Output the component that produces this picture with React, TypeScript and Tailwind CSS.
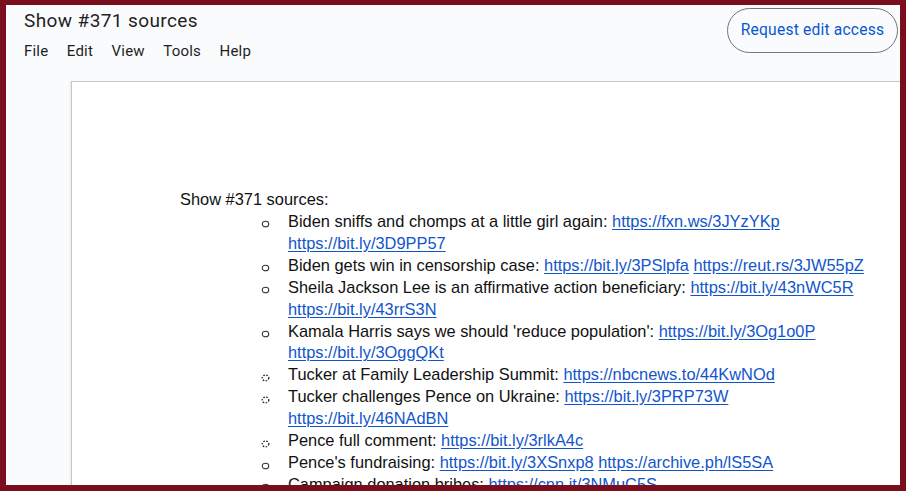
import React from "react";

type Seg = { t: string; link?: boolean };
type Item = { dotted?: boolean; lines: Seg[][] };

const items: Item[] = [
  {
    lines: [
      [{ t: "Biden sniffs and chomps at a little girl again: " }, { t: "https://fxn.ws/3JYzYKp", link: true }],
      [{ t: "https://bit.ly/3D9PP57", link: true }],
    ],
  },
  {
    lines: [
      [
        { t: "Biden gets win in censorship case: " },
        { t: "https://bit.ly/3PSlpfa", link: true },
        { t: " " },
        { t: "https://reut.rs/3JW55pZ", link: true },
      ],
    ],
  },
  {
    lines: [
      [{ t: "Sheila Jackson Lee is an affirmative action beneficiary: " }, { t: "https://bit.ly/43nWC5R", link: true }],
      [{ t: "https://bit.ly/43rrS3N", link: true }],
    ],
  },
  {
    lines: [
      [{ t: "Kamala Harris says we should 'reduce population': " }, { t: "https://bit.ly/3Og1o0P", link: true }],
      [{ t: "https://bit.ly/3OggQKt", link: true }],
    ],
  },
  {
    dotted: true,
    lines: [[{ t: "Tucker at Family Leadership Summit: " }, { t: "https://nbcnews.to/44KwNOd", link: true }]],
  },
  {
    dotted: true,
    lines: [
      [{ t: "Tucker challenges Pence on Ukraine: " }, { t: "https://bit.ly/3PRP73W", link: true }],
      [{ t: "https://bit.ly/46NAdBN", link: true }],
    ],
  },
  {
    dotted: true,
    lines: [[{ t: "Pence full comment: " }, { t: "https://bit.ly/3rlkA4c", link: true }]],
  },
  {
    lines: [
      [
        { t: "Pence's fundraising: " },
        { t: "https://bit.ly/3XSnxp8", link: true },
        { t: " " },
        { t: "https://archive.ph/lS5SA", link: true },
      ],
    ],
  },
  {
    lines: [[{ t: "Campaign donation bribes: " }, { t: "https://cnn.it/3NMuC5S", link: true }]],
  },
];

function Bullet({ dotted }: { dotted?: boolean }) {
  return (
    <svg width="9" height="8" viewBox="0 0 9 8" className="mt-[9.5px]">
      {dotted ? (
        <ellipse cx="4.5" cy="4" rx="3.3" ry="2.9" fill="none" stroke="#222" strokeWidth="1.3" strokeDasharray="1.6 1.4" />
      ) : (
        <ellipse cx="4.5" cy="4" rx="3.2" ry="2.8" fill="none" stroke="#333" strokeWidth="1.1" />
      )}
    </svg>
  );
}

export default function App() {
  return (
    <div className="w-[906px] h-[491px] bg-[#7a0e1c] pt-[5px] pl-[6px] pr-[6px] pb-[6px] overflow-hidden">
      <div className="w-full h-full bg-[#f9fbfd] flex flex-col overflow-hidden">
        {/* header */}
        <div className="h-[76px] shrink-0 flex justify-between" style={{ fontFamily: "Roboto, 'Open Sans', sans-serif" }}>
          <div className="pl-[18px] pt-[3.5px]">
            <div className="text-[19px] leading-[24px] text-[#1f1f1f] tracking-[0.4px]">Show #371 sources</div>
            <div className="mt-[8px] flex gap-[18.5px] text-[15px] leading-[20px] text-[#1f1f1f] tracking-[0.2px]">
              <span>File</span>
              <span>Edit</span>
              <span>View</span>
              <span>Tools</span>
              <span>Help</span>
            </div>
          </div>
          <div className="pt-[3px] pr-[2px]">
            <div className="h-[45px] w-[171px] rounded-full border border-[#747775] flex items-center justify-center text-[15.6px] text-[#0b57d0] tracking-[0.2px]">
              Request edit access
            </div>
          </div>
        </div>
        {/* page area */}
        <div className="flex-1 pl-[65px] overflow-hidden">
          <div
            className="h-full bg-white border-t border-l border-[#c4c7c5] pl-[108px] pt-[107px] text-[#111] text-[16.4px] leading-[21.92px] whitespace-nowrap shadow-[-1px_0_2px_rgba(0,0,0,0.08)]"
            style={{ fontFamily: "'Liberation Sans', Arial, sans-serif" }}
          >
            <div>Show #371 sources:</div>
            {items.map((it, i) => (
              <div key={i} className="flex pl-[81px]">
                <div className="w-[27px] shrink-0">
                  <Bullet dotted={it.dotted} />
                </div>
                <div>
                  {it.lines.map((ln, j) => (
                    <div key={j}>
                      {ln.map((s, k) =>
                        s.link ? (
                          <span key={k} className="text-[#1155cc] underline underline-offset-[2px]">
                            {s.t}
                          </span>
                        ) : (
                          <span key={k} className="whitespace-pre">{s.t}</span>
                        )
                      )}
                    </div>
                  ))}
                </div>
              </div>
            ))}
          </div>
        </div>
      </div>
    </div>
  );
}
